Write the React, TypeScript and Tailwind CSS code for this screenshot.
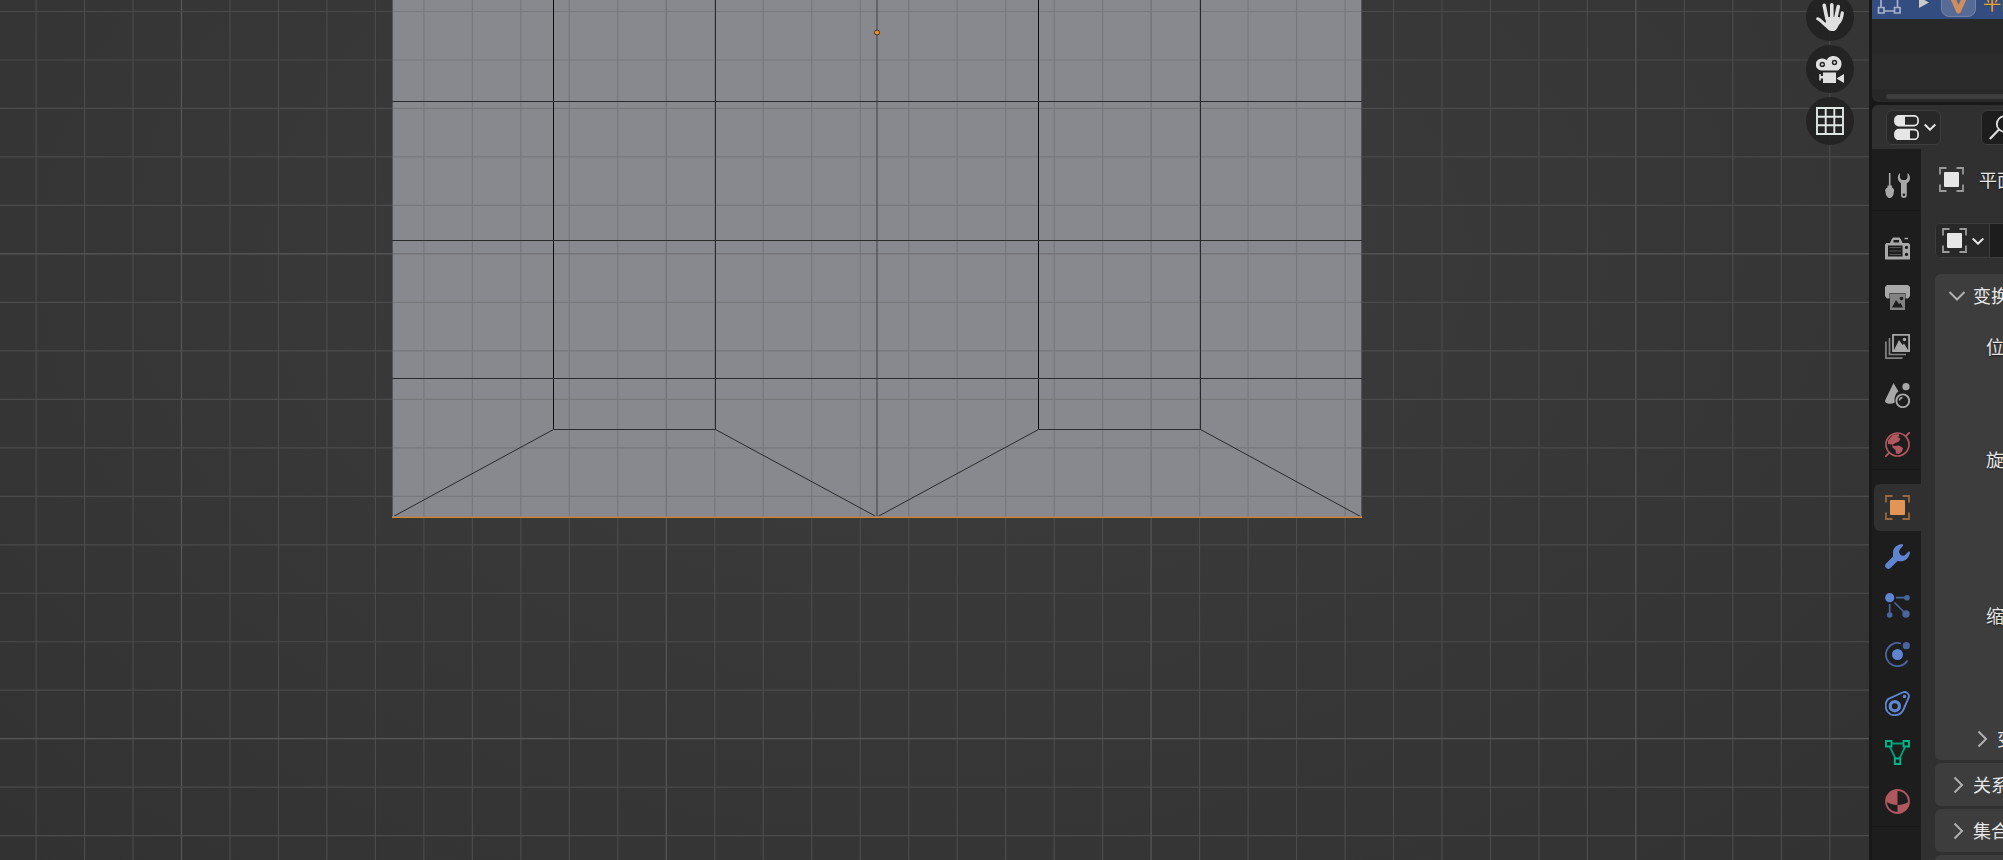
import clsx from 'clsx';
import { type PropsWithChildren, type ReactNode } from 'react';

const STEP = 48.48;
const gridX = Array.from({ length: 60 }, (_, i) => ({ at: 36.06 + i * STEP, major: i % 10 === 3 }));
const gridY = Array.from({ length: 40 }, (_, i) => ({ at: 11.5 + i * STEP, major: i % 10 === 5 }));

function Icon({ size = 25, children }: PropsWithChildren<{ size?: number }>) {
    return (
        <svg width={size} height={size} viewBox={`0 0 ${size} ${size}`} fill="none" className="shrink-0" aria-hidden="true">
            {children}
        </svg>
    );
}

function ObjectIcon({ fill, frame }: { fill: string; frame: string }) {
    return (
        <Icon>
            <path d="M1 7.500V1h6.500M17.500 1H24v6.500M24 17.500V24h-6.500M7.500 24H1v-6.500" stroke={frame} strokeWidth="1.800" />
            <rect x="5" y="5" width="15" height="15" rx="1" fill={fill} />
        </Icon>
    );
}

function Chevron({ right = false, small = false }: { right?: boolean; small?: boolean }) {
    if (small) {
        return (
            <svg width="12" height="8" viewBox="0 0 12 8" fill="none" className="shrink-0" aria-hidden="true">
                <path d="M.7 1.500 6 6.700l5.300-5.200" stroke="#e6e6e6" strokeWidth="2" />
            </svg>
        );
    }
    return (
        <svg width="18" height="18" viewBox="0 0 18 18" fill="none" className="shrink-0" aria-hidden="true">
            <path d={right ? 'M6.500 1.500 14 9l-7.500 7.500' : 'M1.500 5 9 12.500 16.500 5'} stroke="#b0b0b0" strokeWidth="2" />
        </svg>
    );
}

function Label({ children }: PropsWithChildren) {
    return <span className="shrink-0 pb-0.5">{children}</span>;
}

function Grid({ minor, major }: { minor: string; major: string }) {
    return (
        <g strokeWidth="1.200">
            {gridX.map((l) => (
                <path key={`x${l.at}`} d={`M${l.at} 0V2000`} stroke={l.major ? major : minor} />
            ))}
            {gridY.map((l) => (
                <path key={`y${l.at}`} d={`M0 ${l.at}H3000`} stroke={l.major ? major : minor} />
            ))}
        </g>
    );
}

function Scene() {
    return (
        <svg className="absolute inset-0 size-full" aria-label="Mesh">
            <defs>
                <clipPath id="plane">
                    <rect x="392" y="0" width="969.5" height="517" />
                </clipPath>
            </defs>
            <Grid minor="#4b4b4b" major="#585858" />
            <rect x="392" y="0" width="969.5" height="517" fill="#88898e" />
            <g clipPath="url(#plane)">
                <Grid minor="#77787c" major="#707175" />
            </g>
            <g fill="none">
                <path d="M392.5 0V517M1361.5 0V517" stroke="#55565a" />
                <path d="M877 0V517" stroke="#3e3f42" />
                <path d="M715.5 0V429.5M1200.5 0V429.5" stroke="#28292b" />
                <path d="M553.5 0V429.5M1038.5 0V429.5" stroke="#0c0c0d" />
                <path d="M392 101.5H1362M392 240.5H1362M392 378.5H1362" stroke="#2a2a2d" />
                <path d="M392.5 517 553.5 429.5H715.5L877 517 1038.5 429.5H1200.5L1361.5 517" stroke="#2a2a2d" />
                <path d="M392 516.5H1362" stroke="#9a817b" />
                <path d="M392 517.5H1362" stroke="#d0882b" />
            </g>
            <circle cx="877" cy="32.5" r="2.5" fill="#f09020" stroke="#4a3520" />
        </svg>
    );
}

function NavButton({ label, children }: PropsWithChildren<{ label: string }>) {
    return (
        <button aria-label={label} className="flex size-12 items-center justify-center rounded-full bg-[#202020]/85">
            <Icon size={28}>{children}</Icon>
        </button>
    );
}

function Viewport() {
    return (
        <main className="relative min-w-0 flex-1 overflow-hidden bg-[radial-gradient(ellipse_at_50%_30%,#3d3d3d,#323232)]">
            <Scene />
            <nav className="absolute -top-[7px] right-[15px] flex flex-col gap-1">
                <NavButton label="Pan">
                    <g stroke="#e0e0e0" strokeLinecap="round" strokeWidth="3.600">
                        <path d="M8.200 2.300 11 16M15.800 1.800V15M22.300 3.500 19.600 16" />
                        <path d="M26.300 9.800C26 14 25 17 22.500 20M1.800 15.800C4 16.500 6 19 9.500 22" strokeWidth="3.200" />
                    </g>
                    <path d="M9.500 14h14l.8 4c-1 3.500-2.500 6.500-4.300 8.700-1.500 1.700-5.500 1.700-7.500.3L6 20.500l4-1z" fill="#e0e0e0" />
                </NavButton>
                <NavButton label="Camera">
                    <path
                        fill="#e0e0e0"
                        fillRule="evenodd"
                        d="M6 3.500a5.500 5.500 0 0 1 4.500 1.500A8 8 0 1 1 22 15.500H5.500A5.800 5.800 0 0 1 6 3.500zm.3 3.200a2.700 2.700 0 1 0 0 5.400 2.700 2.700 0 0 0 0-5.400zm12.200-1.900a2.700 2.700 0 1 0 0 5.400 2.700 2.700 0 0 0 0-5.400z"
                    />
                    <circle cx="6.300" cy="9.400" r="1.200" fill="#e0e0e0" />
                    <circle cx="18.500" cy="7.500" r="1.200" fill="#e0e0e0" />
                    <path d="M3.300 19h1.500v2H7v-3.500h13V28H7v-4.500H4.800v2H3.300zM20.500 23.500 28 19v9z" fill="#e0e0e0" />
                </NavButton>
                <NavButton label="Orthographic">
                    <path d="M1 1h26v26H1zM9.700 1v26M18.300 1v26M1 9.700h26M1 18.300h26" stroke="#e0e6e2" strokeWidth="1.900" />
                </NavButton>
            </nav>
        </main>
    );
}

function Outliner() {
    return (
        <section className="h-[102px] overflow-hidden rounded-bl-md bg-[#282828]">
            <div className="-mt-4 flex h-[35px] items-center bg-[#334d80] pl-[5px]">
                <svg width="24" height="24" viewBox="0 0 24 24" fill="none" className="shrink-0" aria-hidden="true">
                    <path d="M1 1h5v5H1zM18 1h5v5h-5zM1.500 17.500H7V23H1.500zM17.500 17.500H23V23h-5.500zM7 21h10.500M4 6v11.500M20.500 6v11.500" stroke="#a5b1ca" strokeWidth="1.700" />
                </svg>
                <svg width="10" height="12" viewBox="0 0 10 12" className="ml-[18px] shrink-0" aria-hidden="true">
                    <path d="M0 1v11l10-5.500z" fill="#c9c9c9" />
                </svg>
                <span className="ml-3 flex h-[31px] w-[35px] shrink-0 items-center justify-center rounded-lg border border-[#7383a5] bg-[#566b96]">
                    <Icon>
                        <path d="M4 3 12.500 22 21 3" stroke="#cf8d60" strokeWidth="5" strokeLinejoin="round" />
                    </Icon>
                </span>
                <span className="ml-[7px] shrink-0 text-[#f5a21c]">平面</span>
            </div>
            <div className="h-[35px]" />
            <div className="h-[35px] bg-[#2b2b2b]" />
            <div className="mt-[5px] ml-3.5 h-[5px] rounded-l-full bg-[#3d3d3d]" />
        </section>
    );
}

const tabGroups: { label: string; active?: boolean; icon: ReactNode }[][] = [
    [
        {
            label: 'Tool',
            icon: (
                <Icon>
                    <path d="M4.700 0v14" stroke="#a8a8a8" strokeWidth="1.600" />
                    <path d="M2.500 12.500H7V14.500c2 .8 2.500 2.500 1.800 4.500-.2 3.500-1.800 6-4.100 6S.8 22.500.5 19c-.7-2 0-3.700 2-4.500z" fill="#a8a8a8" />
                    <path
                        fill="#a8a8a8"
                        fillRule="evenodd"
                        d="M15 0c-2 1.500-2.800 5-1.500 7.500.6 1.200 1.500 2.200 2.500 2.800V22a2.900 2.900 0 0 0 5.800 0V10.300C24 9 25 7 25 5c0-2-.8-4-2.500-5V5l-1.700 2h-4L15 5zM18.900 20.500a1.300 1.300 0 1 1 0 2.600 1.300 1.300 0 0 1 0-2.600z"
                    />
                </Icon>
            ),
        },
    ],
    [
        {
            label: 'Render',
            icon: (
                <Icon>
                    <path
                        fill="#a8a8a8"
                        fillRule="evenodd"
                        d="M0 8.500 1.500 7H5l1.500-3.500L8 1.500h6.500L16 3.500 17.500 7h6L25 8.500V23.500H0zM8.500 4v2.500h5.500V4zM3 9.500V20.500h14.500V9.500zm18.500.2a1.700 1.700 0 1 0 0 3.400 1.700 1.700 0 0 0 0-3.400zm0 7a1.700 1.700 0 1 0 0 3.400 1.700 1.700 0 0 0 0-3.400z"
                    />
                    <path d="M19.500 2.500H23" stroke="#a8a8a8" strokeWidth="1.600" />
                    <path d="M4.500 11.500h11.500M4.500 15h11.500M4.500 18.500h11.500" stroke="#555" strokeWidth="1" />
                </Icon>
            ),
        },
        {
            label: 'Output',
            icon: (
                <Icon>
                    <path d="M2 0h21l2 2v9l-2 2.500h-2.500V8h-16v5.500H2L0 11V2z" fill="#a8a8a8" />
                    <path fillRule="evenodd" fill="#828282" d="M5 8.500h15V25H5zM7 22.500h11l-2.500-4.500-1.500 1-3-4z" />
                    <circle cx="16.500" cy="13.500" r="1.800" fill="#1d1d1d" />
                </Icon>
            ),
        },
        {
            label: 'View Layer',
            icon: (
                <Icon>
                    <path d="M8 .9h16.100V17H8z" stroke="#a8a8a8" strokeWidth="1.800" />
                    <path d="M9 16 14 6l3.500 5 1.500-1.500 4 6.500z" fill="#a8a8a8" />
                    <circle cx="19.500" cy="5.500" r="1.700" fill="#a8a8a8" />
                    <path d="M4.500 4v16.500H21M.9 7.500v16.600H17.500" stroke="#828282" strokeWidth="1.700" />
                </Icon>
            ),
        },
        {
            label: 'Scene',
            icon: (
                <Icon>
                    <path d="M8.500 0 13.500 8.500c-3 2-4.500 6-3.700 11-3 1.700-7 1.700-9-.1C0 19 0 18 .3 17z" fill="#a8a8a8" />
                    <circle cx="21" cy="3.700" r="3.600" fill="#a8a8a8" />
                    <circle cx="17.800" cy="17.800" r="6.400" stroke="#a8a8a8" strokeWidth="1.900" />
                    <path d="M14.500 17.500a3.300 3.300 0 0 1 3-3" stroke="#a8a8a8" strokeWidth="1.500" />
                </Icon>
            ),
        },
        {
            label: 'World',
            icon: (
                <Icon>
                    <circle cx="12.500" cy="12.500" r="11.500" stroke="#b1575f" strokeWidth="1.700" />
                    <path d="M20.500 4.500 25 0M4.500 20.500 0 25" stroke="#b1575f" strokeWidth="1.800" />
                    <path d="M3 8.500 8 2.500 13.500 2l1 2.500-2 .5 3 1.500-1.500 3-3.500 1.500L7 13l2.500 1 4.500-.5 4 2.500-1 3.500-3 2.500-3-.5-.5-3.500-3-2.500-.5-3L3 12z" fill="#b1575f" />
                </Icon>
            ),
        },
    ],
    [
        { label: 'Object', active: true, icon: <ObjectIcon fill="#e19658" frame="#99683f" /> },
        {
            label: 'Modifiers',
            icon: (
                <Icon>
                    <path
                        d="M17.500 0C12 .2 7.500 4 8 9.500L8 12.500.8 19.700c-2.300 2.500 1.200 7 4.400 4.600L12.600 17c6 1.500 11.800-2 12.400-9l-1-.7-4.500 4.200c-3 .7-5-1-5.400-3.500C14 5.500 16 4 18.200 1.500z"
                        fill="#5f85d1"
                    />
                </Icon>
            ),
        },
        {
            label: 'Particles',
            icon: (
                <Icon>
                    <path d="M11 4.700h11M4.700 11v11M9.500 9.500l11 11" stroke="#4a659d" strokeWidth="1.700" />
                    <circle cx="4.700" cy="4.700" r="4.600" fill="#5f85d1" />
                    <circle cx="22" cy="4.700" r="2.800" fill="#4a659d" />
                    <circle cx="4.700" cy="22" r="2.800" fill="#4a659d" />
                    <circle cx="21" cy="21" r="3.700" fill="#4a659d" />
                </Icon>
            ),
        },
        {
            label: 'Physics',
            icon: (
                <Icon>
                    <path d="M16 1.500A11.600 11.600 0 1 0 22.500 18.500" stroke="#4a659d" strokeWidth="1.800" />
                    <circle cx="12.500" cy="12.500" r="5.500" fill="#5f85d1" />
                    <circle cx="21.300" cy="3.700" r="3.600" fill="#4a659d" />
                </Icon>
            ),
        },
        {
            label: 'Constraints',
            icon: (
                <Icon>
                    <path d="M3.500 7.800 17.500 1.500c3.500-1.500 7.500 1.500 6.200 5L18.500 18.500c-3 6.500-11.500 7.500-15.700 2.500C-.3 17-.2 11 3.500 7.800z" stroke="#5f85d1" strokeWidth="1.900" />
                    <circle cx="9.800" cy="15.200" r="4.600" stroke="#5f85d1" strokeWidth="3.200" />
                    <circle cx="19.500" cy="5.500" r="1.800" fill="#5f85d1" />
                </Icon>
            ),
        },
        {
            label: 'Data',
            icon: (
                <Icon>
                    <path d="M7 3.500h11M5 7l5.500 11.500M20 7l-5.500 11.500" stroke="#009e75" strokeWidth="1.800" />
                    <path d="M1 1h5.500v5.500H1zM18.500 1H24v5.500h-5.500zM9.800 18.500h5.500V24H9.800z" stroke="#00b586" strokeWidth="1.900" />
                </Icon>
            ),
        },
        {
            label: 'Material',
            icon: (
                <Icon>
                    <circle cx="12.500" cy="12.500" r="11.500" stroke="#b1575f" strokeWidth="1.800" />
                    <path d="M12.500 1v15C8 16 4 14.500 1 12.500A11.500 11.500 0 0 1 12.500 1zM12.500 16c4.500 0 8.500-1.500 11.500-3.500A11.500 11.500 0 0 1 12.500 24z" fill="#b1575f" />
                </Icon>
            ),
        },
    ],
];

function Tabs() {
    return (
        <nav className="flex w-[49px] shrink-0 flex-col gap-[14px] bg-[#1d1d1d] pt-3">
            {tabGroups.map((group, i) => (
                <div key={i} className="shadow-[0_1px_0_#191919]">
                    {group.map((tab) => (
                        <button key={tab.label} aria-label={tab.label} className="flex h-[49px] w-full items-center py-px pl-0.5">
                            <span className={clsx('flex h-full w-full items-center rounded-l-md pl-[11px]', tab.active && 'bg-[#303030]')}>
                                {tab.icon}
                            </span>
                        </button>
                    ))}
                </div>
            ))}
        </nav>
    );
}

function Panel({ title, open = false, children }: PropsWithChildren<{ title: string; open?: boolean }>) {
    return (
        <section className="overflow-hidden rounded-l-md bg-[#3d3d3d]">
            <button aria-expanded={open} className="flex h-[43px] items-center gap-[7px] pl-[13px]">
                <Chevron right={!open} />
                <Label>{title}</Label>
            </button>
            {children}
        </section>
    );
}

function Properties() {
    return (
        <section className="flex min-h-0 flex-1 flex-col overflow-hidden rounded-tl-md bg-[#303030] [text-shadow:0_1px_2px_#0009]">
            <header className="flex h-11 shrink-0 items-center gap-10 pl-3.5">
                <button aria-label="Editor type" className="flex h-[35px] w-[55px] shrink-0 items-center gap-[5px] rounded-md border border-[#3d3d3d] bg-[#282828] pl-[7px]">
                    <Icon>
                        <rect x=".9" y=".9" width="23.200" height="9.700" rx="4" stroke="#e6e6e6" strokeWidth="1.700" />
                        <rect x=".9" y="14.700" width="23.200" height="9.700" rx="4" stroke="#e6e6e6" strokeWidth="1.700" />
                        <path d="M4.500.9H11v9.700H4.500C0 10 0 1.500 4.500.9zM4.500 14.700H16v9.700H4.500c-4.500-.6-4.500-9.100 0-9.700z" fill="#e6e6e6" />
                    </Icon>
                    <Chevron small />
                </button>
                <label className="flex h-[35px] w-60 shrink-0 items-center rounded-md border border-[#3d3d3d] bg-[#1d1d1d] pl-[7px]">
                    <Icon>
                        <circle cx="15.500" cy="9" r="7.700" stroke="#e0e0e0" strokeWidth="1.800" />
                        <path d="M10 14.500.8 24" stroke="#e0e0e0" strokeWidth="2.100" />
                    </Icon>
                    <input aria-label="Search" className="w-40 bg-transparent outline-none" />
                </label>
            </header>
            <div className="flex min-h-0 flex-1">
                <Tabs />
                <div className="min-w-0 flex-1 overflow-hidden pt-[18px] pl-3.5 whitespace-nowrap">
                    <div className="flex h-[25px] items-center gap-[15px] pl-1">
                        <ObjectIcon fill="#e6e6e6" frame="#9a9a9a" />
                        <Label>平面</Label>
                    </div>
                    <div className="mt-[31px] flex h-[35px] w-60 overflow-hidden rounded-md border border-[#3d3d3d] bg-[#1d1d1d]">
                        <button aria-label="Object" className="flex w-[54px] shrink-0 items-center gap-[5px] border-r border-[#3d3d3d] bg-[#282828] pl-[6px]">
                            <ObjectIcon fill="#e6e6e6" frame="#9a9a9a" />
                            <Chevron small />
                        </button>
                    </div>
                    <div className="mt-4 flex flex-col gap-[3px]">
                        <Panel title="变换" open>
                            <div className="flex h-[443px] flex-col pl-[51px]">
                                <div className="h-[113px] pt-[15px]">位置</div>
                                <div className="h-[156px] pt-[15px]">旋转</div>
                                <div className="flex-1 pt-[15px]">缩放</div>
                                <button className="-ml-3.5 flex h-[43px] items-center gap-[7px]">
                                    <Chevron right />
                                    <Label>变换增量</Label>
                                </button>
                            </div>
                        </Panel>
                        <Panel title="关系" />
                        <Panel title="集合" />
                        <Panel title="实例化" />
                    </div>
                </div>
            </div>
        </section>
    );
}

export default function App() {
    return (
        <div className="flex h-screen gap-[3px] overflow-hidden bg-[#181818] font-['Noto_Sans_CJK_SC',sans-serif] text-lg text-[#e6e6e6]">
            <Viewport />
            <aside className="flex w-[131px] shrink-0 flex-col gap-[3px] overflow-hidden">
                <Outliner />
                <Properties />
            </aside>
        </div>
    );
}
